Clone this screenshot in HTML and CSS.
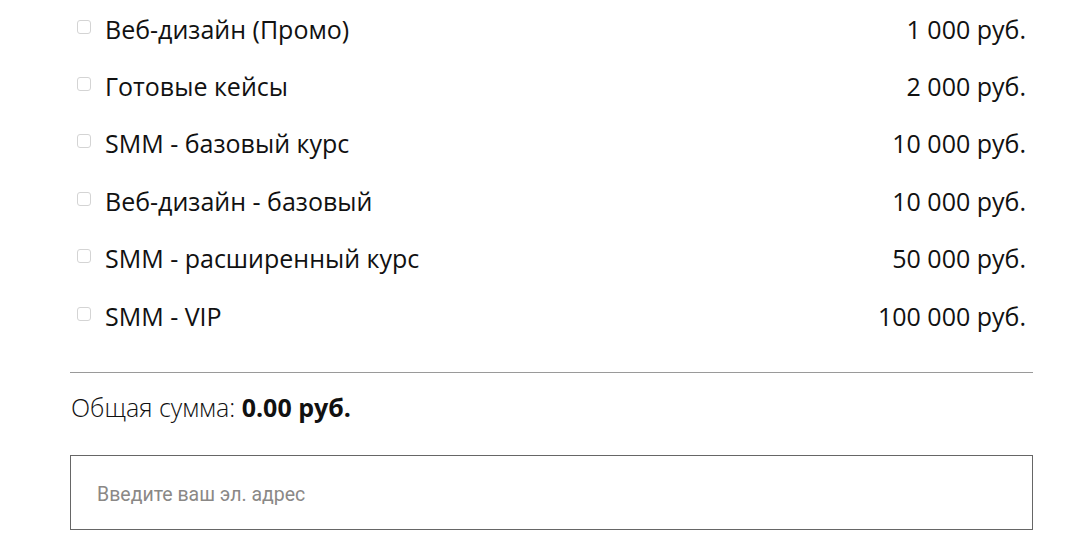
FILE: index.html
```html
<!DOCTYPE html>
<html lang="ru">
<head>
<meta charset="utf-8">
<link rel="stylesheet" href="styles.css">
</head>
<body>
<div class="form">
  <ul class="items">
    <li class="item"><label class="lbl"><input type="checkbox" class="cb"><span>Веб-дизайн (Промо)</span></label><span class="price">1 000 руб.</span></li>
    <li class="item"><label class="lbl"><input type="checkbox" class="cb"><span>Готовые кейсы</span></label><span class="price">2 000 руб.</span></li>
    <li class="item"><label class="lbl"><input type="checkbox" class="cb"><span>SMM - базовый курс</span></label><span class="price">10 000 руб.</span></li>
    <li class="item"><label class="lbl"><input type="checkbox" class="cb"><span>Веб-дизайн - базовый</span></label><span class="price">10 000 руб.</span></li>
    <li class="item"><label class="lbl"><input type="checkbox" class="cb"><span>SMM - расширенный курс</span></label><span class="price">50 000 руб.</span></li>
    <li class="item"><label class="lbl"><input type="checkbox" class="cb"><span>SMM - VIP</span></label><span class="price">100 000 руб.</span></li>
  </ul>
  <hr class="divider">
  <div class="total">Общая сумма: <strong>0.00 руб.</strong></div>
  <input class="email" type="text" placeholder="Введите ваш эл. адрес">
</div>
</body>
</html>
```
FILE: styles.css
```css
html, body {
  margin: 0;
  padding: 0;
  background: #fff;
}
.form {
  width: 963px;
  margin-left: 70px;
  font-family: "Open Sans", "Liberation Sans", sans-serif;
  color: #111;
}
.items {
  list-style: none;
  margin: 0;
  padding: 0;
}
.item {
  display: flex;
  justify-content: space-between;
  align-items: center;
  height: 57.4px;
  padding-right: 7px;
  font-size: 25px;
  line-height: 34px;
}
.lbl {
  display: flex;
  align-items: center;
  gap: 14px;
}
.cb {
  appearance: none;
  -webkit-appearance: none;
  width: 14px;
  height: 14px;
  margin: 0 0 0 7px;
  border: 1px solid #d4d4d4;
  border-radius: 3px;
  background: #fff;
  position: relative;
  top: -2px;
}
.price {
  white-space: nowrap;
}
.divider {
  border: 0;
  border-top: 1px solid #9a9a9a;
  margin: 28px 0 0 0;
  height: 0;
}
.total {
  font-size: 25px;
  font-weight: 300;
  margin-top: 17px;
  line-height: 34px;
  padding-left: 1px;
}
.total strong {
  font-weight: 700;
}
.email {
  display: block;
  box-sizing: border-box;
  width: 963px;
  height: 75px;
  margin-top: 31px;
  border: 1px solid #666;
  padding: 4px 26px 0 26px;
  font-family: Roboto, "Liberation Sans", sans-serif;
  font-size: 19.5px;
  color: #333;
  outline: none;
}
.email::placeholder {
  color: #8a8886;
}
```
